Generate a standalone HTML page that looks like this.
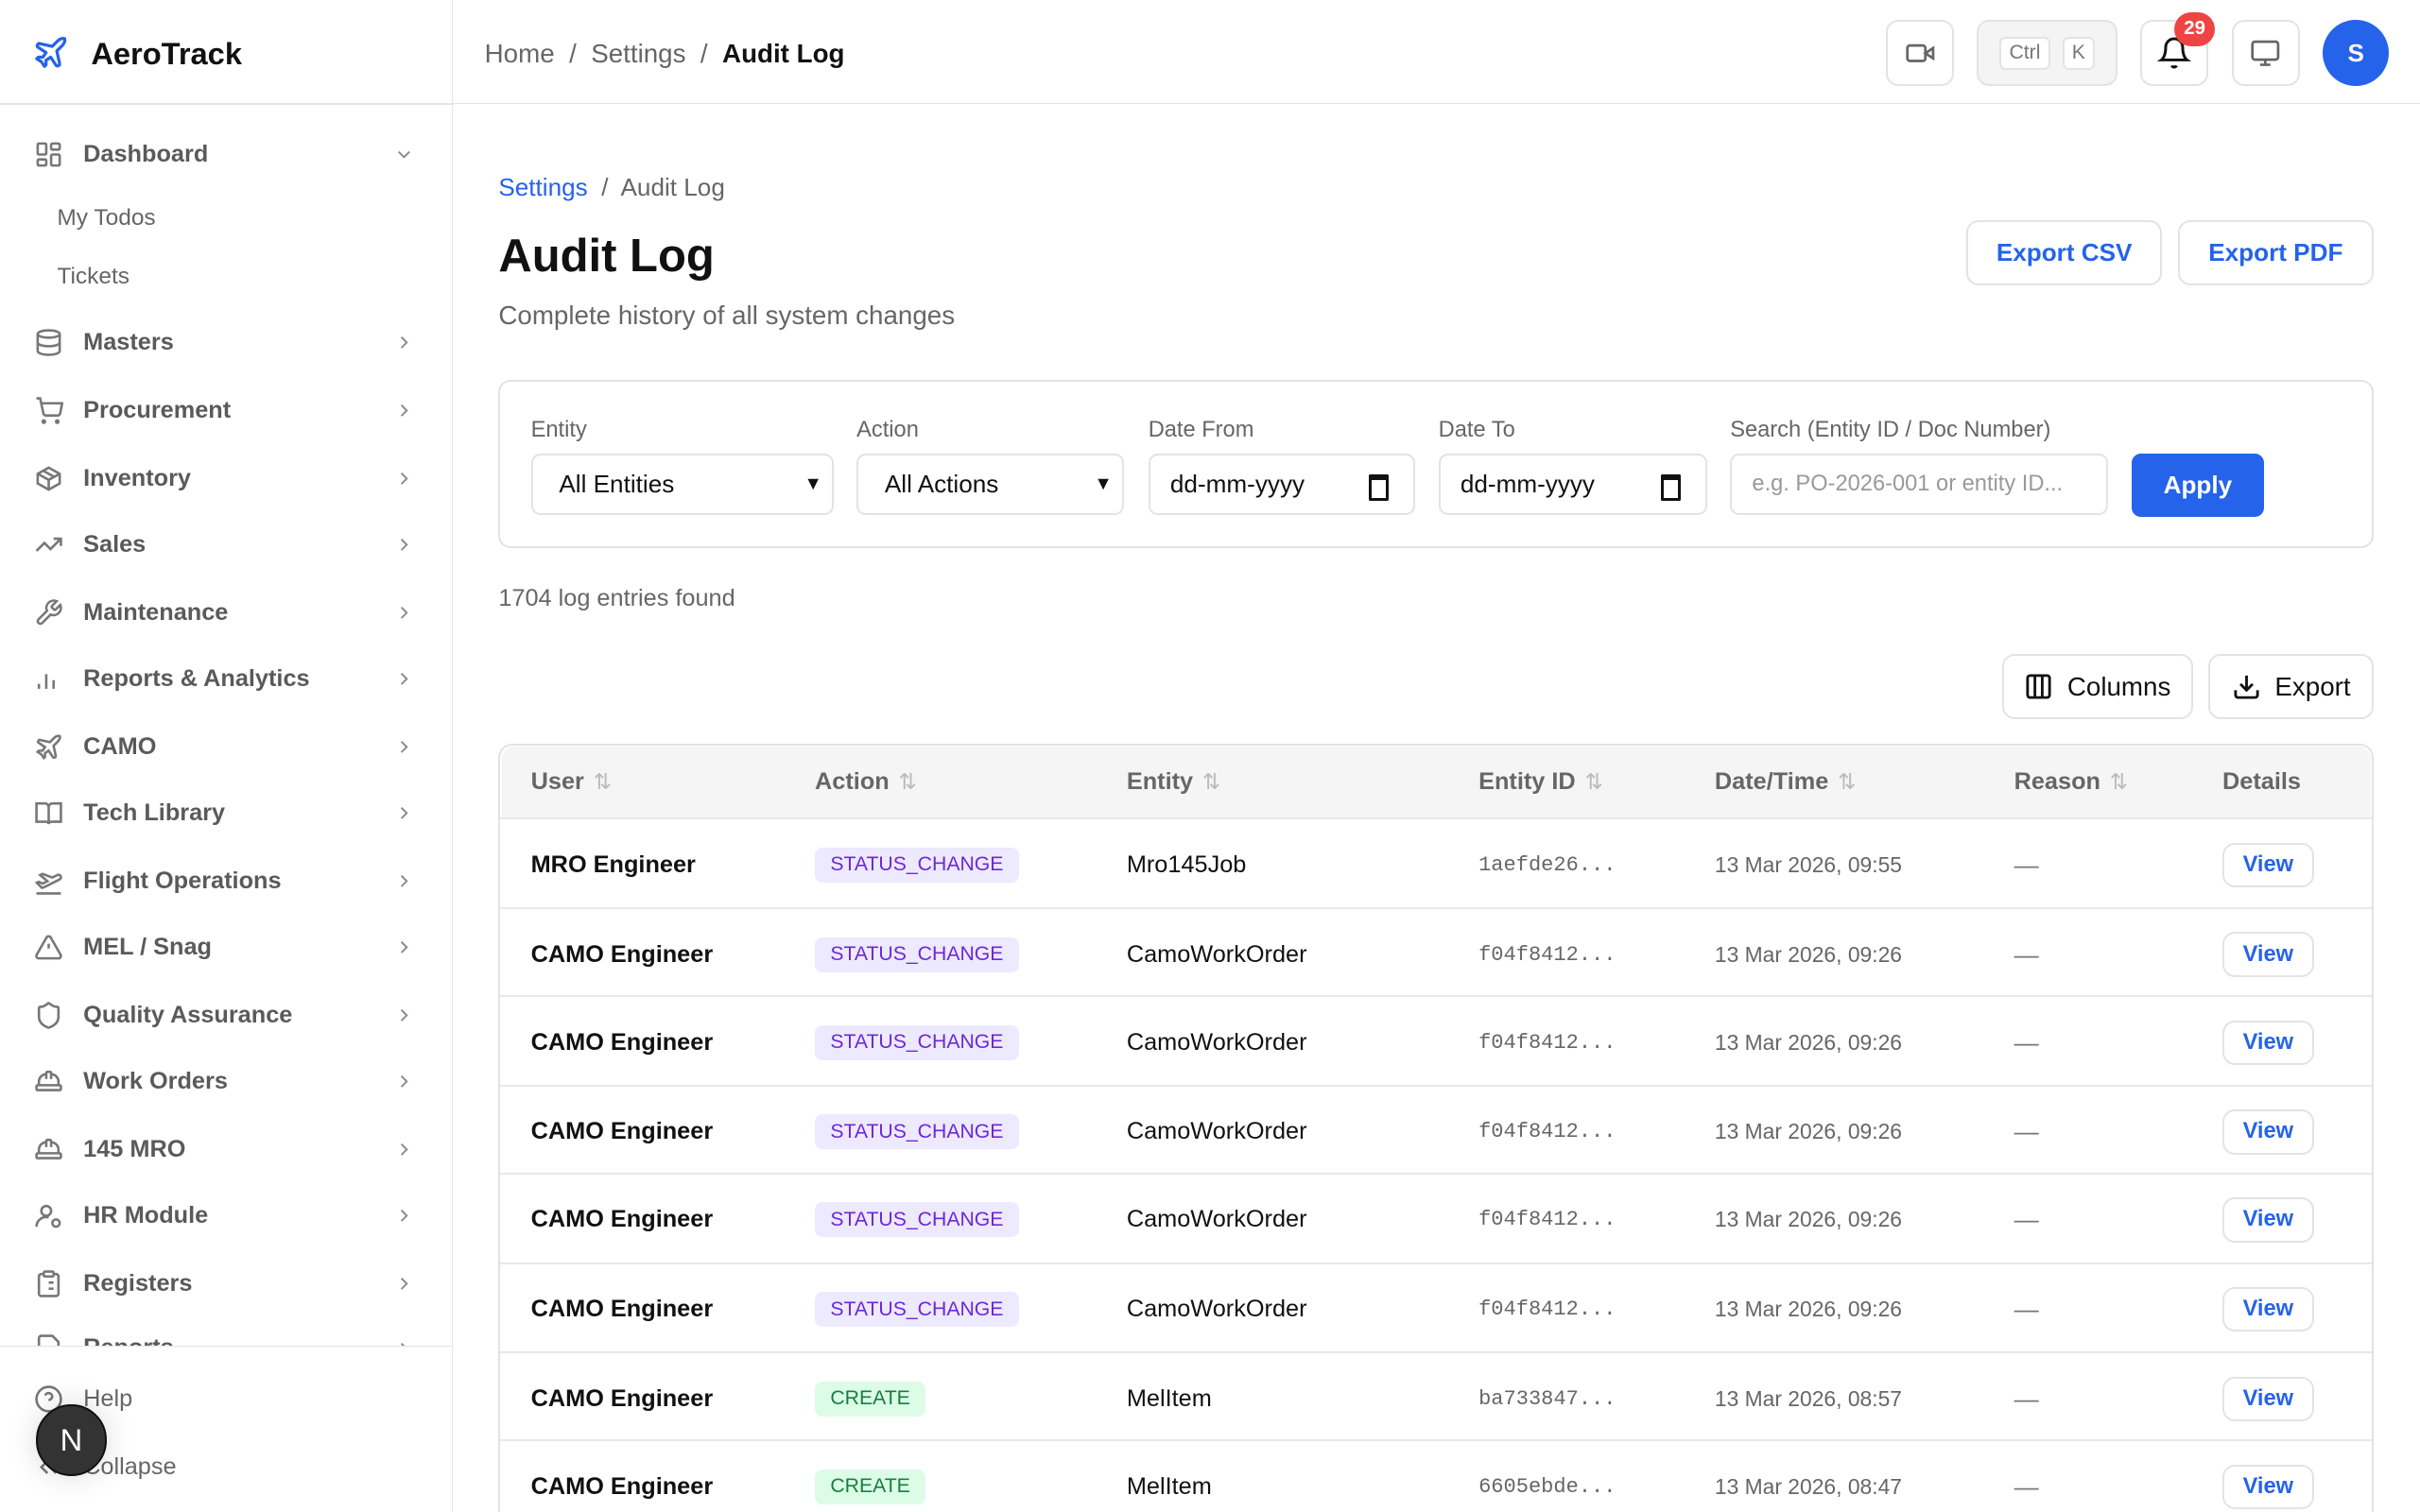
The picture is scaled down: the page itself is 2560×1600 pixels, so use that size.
<!DOCTYPE html>
<html><head><meta charset="utf-8"><style>
html,body{margin:0;padding:0;width:2560px;height:1600px;overflow:hidden;background:#fff}
#w{position:absolute;left:0;top:0;width:1568px;height:980px;zoom:1.63265;font-family:"Liberation Sans",sans-serif;color:#111;overflow:hidden}
.a{position:absolute}
.sb{left:0;top:0;width:293px;height:980px;border-right:1px solid #e5e5e5}
.hd{left:294px;top:0;right:0;height:67px;border-bottom:1px solid #e5e5e5}
.hline{left:0;top:67px;width:294px;height:1px;background:#e5e5e5}
.ni{position:absolute;left:22px;width:250px;height:24px;display:flex;align-items:center;font-size:15.5px;font-weight:bold;color:#5a5a5a}
.ni svg{width:19px;height:19px;margin-right:13px;flex:none}
.ni .ch{position:absolute;right:-10px;top:5px;width:14px;height:14px}
.sub{position:absolute;left:37px;font-size:15px;color:#666}
.btn{position:absolute;border:1.5px solid #e3e3e3;border-radius:8px;background:#fff;box-sizing:border-box;display:flex;align-items:center;justify-content:center}
.lbl{position:absolute;top:271px;font-size:14.5px;color:#666}
.inp{position:absolute;top:294px;height:40px;border:1.5px solid #e3e3e3;border-radius:6px;box-sizing:border-box;font-size:16px;display:flex;align-items:center;padding-left:17px;color:#111}
.th{position:absolute;top:498px;font-size:15.5px;font-weight:bold;color:#666}
.th i{font-style:normal;color:#bbb;font-weight:normal;margin-left:6px;font-size:14px}
.row{position:absolute;left:324px;width:1213px;height:57px;border-top:1.5px solid #e8e8e8}
.row div{position:absolute;top:1px;height:57px;display:flex;align-items:center}
.u{left:20px;font-weight:bold;font-size:15.5px}
.bd{left:204px}
.bd span{padding:4px 10px;border-radius:5px;font-size:13px;letter-spacing:0}
.s span{background:#ede9fe;color:#6d28d9}
.c span{background:#dcfce7;color:#15803d}
.en{left:406px;font-size:15.5px}
.id{left:634px;font-family:"Liberation Mono",monospace;font-size:13.5px;color:#666}
.dt{left:787px;font-size:14px;color:#666}
.rs{left:981px;color:#777}
.vw{left:1116px}
.vw span{border:1.5px solid #e3e3e3;border-radius:8px;padding:5px 12px;color:#2563eb;font-weight:bold;font-size:14.5px}
</style></head><body><div id="w">
<div class="a sb"></div>
<div class="a hd"></div>
<div class="a hline"></div>
<svg class="a" style="left:21px;top:22px" width="24" height="24" viewBox="0 0 24 24" fill="none" stroke="#2563eb" stroke-width="2" stroke-linecap="round" stroke-linejoin="round"><path d="M17.8 19.2 16 11l3.5-3.5C21 6 21.5 4 21 3c-1-.5-3 0-4.5 1.5L13 8 4.8 6.2c-.5-.1-.9.1-1.1.5l-.3.5c-.2.5-.1 1 .3 1.3L9 12l-2 3H4l-1 1 3 2 2 3 1-1v-3l3-2 3.5 5.3c.3.4.8.5 1.3.3l.5-.2c.4-.3.6-.7.5-1.2z"/></svg>
<div class="a" style="left:59px;top:23px;font-size:20px;font-weight:bold">AeroTrack</div>
<div class="a" style="left:314px;top:25px;font-size:17px;color:#666">Home &nbsp;/&nbsp; Settings &nbsp;/&nbsp; <b style="color:#111">Audit Log</b></div>
<div class="btn" style="left:1222px;top:13px;width:44px;height:43px"><svg width="20" height="20" viewBox="0 0 24 24" fill="none" stroke="#666" stroke-width="2"><rect x="2" y="6" width="14" height="12" rx="2"/><path d="m22 8-6 4 6 4z"/></svg></div>
<div class="btn" style="left:1281px;top:13px;width:91px;height:43px;background:#f4f4f4"><span style="border:1.5px solid #e3e3e3;background:#fff;border-radius:4px;font-size:13px;color:#777;padding:2px 5px;margin-right:8px">Ctrl</span><span style="border:1.5px solid #e3e3e3;background:#fff;border-radius:4px;font-size:13px;color:#777;padding:2px 5px">K</span></div>
<div class="btn" style="left:1387px;top:13px;width:44px;height:43px"><svg width="22" height="22" viewBox="0 0 24 24" fill="none" stroke="#111" stroke-width="2"><path d="M6 8a6 6 0 0 1 12 0c0 7 3 9 3 9H3s3-2 3-9"/><path d="M10.3 21a1.9 1.9 0 0 0 3.4 0"/></svg></div>
<div class="a" style="left:1409px;top:8px;width:26px;height:22px;border-radius:11px;background:#ef4444;color:#fff;font-size:12.5px;font-weight:bold;text-align:center;line-height:22px">29</div>
<div class="btn" style="left:1446px;top:13px;width:44px;height:43px"><svg width="20" height="20" viewBox="0 0 24 24" fill="none" stroke="#666" stroke-width="2"><rect x="2" y="3" width="20" height="14" rx="2"/><path d="M8 21h8M12 17v4"/></svg></div>
<div class="a" style="left:1505px;top:13px;width:43px;height:43px;border-radius:50%;background:#2563eb;color:#fff;font-weight:bold;font-size:16px;text-align:center;line-height:43px">S</div>

<div class="ni" style="top:88px"><svg viewBox="0 0 24 24" fill="none" stroke="#777" stroke-width="2"><rect x="3" y="3" width="7" height="9" rx="1"/><rect x="14" y="3" width="7" height="5" rx="1"/><rect x="14" y="12" width="7" height="9" rx="1"/><rect x="3" y="16" width="7" height="5" rx="1"/></svg>Dashboard<svg class="ch" viewBox="0 0 24 24" fill="none" stroke="#888" stroke-width="2"><path d="m6 9 6 6 6-6"/></svg></div>
<div class="sub" style="top:133px">My Todos</div>
<div class="sub" style="top:171px">Tickets</div>
<div class="a" style="left:0;top:872px;width:293px;height:1.5px;background:#e5e5e5;z-index:2"></div>
<div class="a" style="left:0;top:873px;width:293px;height:107px;background:#fff;z-index:2"></div>
<div class="ni" style="top:895px;font-weight:normal;color:#666;z-index:3"><svg viewBox="0 0 24 24" fill="none" stroke="#777" stroke-width="2"><circle cx="12" cy="12" r="10"/><path d="M9.1 9a3 3 0 0 1 5.8 1c0 2-3 3-3 3M12 17h.01"/></svg>Help</div>
<div class="ni" style="top:939px;font-weight:normal;color:#666;z-index:3"><svg viewBox="0 0 24 24" fill="none" stroke="#777" stroke-width="2"><path d="m11 17-5-5 5-5M18 17l-5-5 5-5"/></svg>Collapse</div>
<div class="a" style="left:23px;top:910px;width:44px;height:44px;border-radius:50%;background:#333;border:1.5px solid #111;color:#fff;font-size:20px;text-align:center;line-height:44px;box-shadow:0 0 20px rgba(0,0,0,.15);z-index:4">N</div>

<div class="a" style="left:323px;top:112px;font-size:16px;color:#666"><span style="color:#2563eb">Settings</span> &nbsp;/&nbsp; Audit Log</div>
<div class="a" style="left:323px;top:149px;font-size:30px;font-weight:bold">Audit Log</div>
<div class="a" style="left:323px;top:195px;font-size:17px;color:#666">Complete history of all system changes</div>
<div class="btn" style="left:1274px;top:143px;width:127px;height:42px;color:#2563eb;font-weight:bold;font-size:16px">Export CSV</div>
<div class="btn" style="left:1411px;top:143px;width:127px;height:42px;color:#2563eb;font-weight:bold;font-size:16px">Export PDF</div>

<div class="a" style="left:323px;top:246px;width:1215px;height:109px;border:1.5px solid #e3e3e3;border-radius:8px;box-sizing:border-box"></div>
<div class="lbl" style="left:344px">Entity</div>
<div class="lbl" style="left:555px">Action</div>
<div class="lbl" style="left:744px">Date From</div>
<div class="lbl" style="left:932px">Date To</div>
<div class="lbl" style="left:1121px">Search (Entity ID / Doc Number)</div>
<div class="inp" style="left:344px;width:196px">All Entities<span style="position:absolute;right:6px;font-size:12px">&#9660;</span></div>
<div class="inp" style="left:555px;width:173px">All Actions<span style="position:absolute;right:6px;font-size:12px">&#9660;</span></div>
<div class="inp" style="left:744px;width:173px;padding-left:13px">dd-mm-yyyy<span style="position:absolute;right:16px;top:12px;width:9px;height:12px;border:2px solid #111;border-top-width:4px;border-radius:1px"></span></div>
<div class="inp" style="left:932px;width:174px;padding-left:13px">dd-mm-yyyy<span style="position:absolute;right:16px;top:12px;width:9px;height:12px;border:2px solid #111;border-top-width:4px;border-radius:1px"></span></div>
<div class="inp" style="left:1121px;width:245px;color:#999;font-size:14.5px;padding-left:13px">e.g. PO-2026-001 or entity ID...</div>
<div class="a" style="left:1381px;top:294px;width:86px;height:41px;border-radius:6px;background:#2563eb;color:#fff;font-weight:bold;font-size:16px;text-align:center;line-height:41px">Apply</div>

<div class="a" style="left:323px;top:379px;font-size:15.5px;color:#666">1704 log entries found</div>
<div class="btn" style="left:1297px;top:424px;width:124px;height:42px;font-size:17px"><svg width="19" height="19" viewBox="0 0 24 24" fill="none" stroke="#111" stroke-width="2.2" style="margin-right:9px"><rect x="3" y="3" width="18" height="18" rx="2"/><path d="M9 3v18M15 3v18"/></svg>Columns</div>
<div class="btn" style="left:1431px;top:424px;width:107px;height:42px;font-size:17px"><svg width="19" height="19" viewBox="0 0 24 24" fill="none" stroke="#111" stroke-width="2.2" style="margin-right:9px"><path d="M21 15v4a2 2 0 0 1-2 2H5a2 2 0 0 1-2-2v-4M7 10l5 5 5-5M12 15V3"/></svg>Export</div>

<div class="a" style="left:323px;top:482px;width:1215px;height:520px;border:1.5px solid #e3e3e3;border-radius:9px;box-sizing:border-box"></div>
<div class="a" style="left:325px;top:484px;width:1211px;height:46px;background:#f5f5f5;border-radius:8px 8px 0 0"></div>
<div class="th" style="left:344px">User<i>&#8645;</i></div>
<div class="th" style="left:528px">Action<i>&#8645;</i></div>
<div class="th" style="left:730px">Entity<i>&#8645;</i></div>
<div class="th" style="left:958px">Entity ID<i>&#8645;</i></div>
<div class="th" style="left:1111px">Date/Time<i>&#8645;</i></div>
<div class="th" style="left:1305px">Reason<i>&#8645;</i></div>
<div class="th" style="left:1440px">Details</div>

<div class="row" style="top:530px"><div class="u">MRO Engineer</div><div class="bd s"><span>STATUS_CHANGE</span></div><div class="en">Mro145Job</div><div class="id">1aefde26...</div><div class="dt">13 Mar 2026, 09:55</div><div class="rs">—</div><div class="vw"><span>View</span></div></div>
<div class="row" style="top:588px"><div class="u">CAMO Engineer</div><div class="bd s"><span>STATUS_CHANGE</span></div><div class="en">CamoWorkOrder</div><div class="id">f04f8412...</div><div class="dt">13 Mar 2026, 09:26</div><div class="rs">—</div><div class="vw"><span>View</span></div></div>
<div class="row" style="top:645px"><div class="u">CAMO Engineer</div><div class="bd s"><span>STATUS_CHANGE</span></div><div class="en">CamoWorkOrder</div><div class="id">f04f8412...</div><div class="dt">13 Mar 2026, 09:26</div><div class="rs">—</div><div class="vw"><span>View</span></div></div>
<div class="row" style="top:703px"><div class="u">CAMO Engineer</div><div class="bd s"><span>STATUS_CHANGE</span></div><div class="en">CamoWorkOrder</div><div class="id">f04f8412...</div><div class="dt">13 Mar 2026, 09:26</div><div class="rs">—</div><div class="vw"><span>View</span></div></div>
<div class="row" style="top:760px"><div class="u">CAMO Engineer</div><div class="bd s"><span>STATUS_CHANGE</span></div><div class="en">CamoWorkOrder</div><div class="id">f04f8412...</div><div class="dt">13 Mar 2026, 09:26</div><div class="rs">—</div><div class="vw"><span>View</span></div></div>
<div class="row" style="top:818px"><div class="u">CAMO Engineer</div><div class="bd s"><span>STATUS_CHANGE</span></div><div class="en">CamoWorkOrder</div><div class="id">f04f8412...</div><div class="dt">13 Mar 2026, 09:26</div><div class="rs">—</div><div class="vw"><span>View</span></div></div>
<div class="row" style="top:876px"><div class="u">CAMO Engineer</div><div class="bd c"><span>CREATE</span></div><div class="en">MelItem</div><div class="id">ba733847...</div><div class="dt">13 Mar 2026, 08:57</div><div class="rs">—</div><div class="vw"><span>View</span></div></div>
<div class="row" style="top:933px"><div class="u">CAMO Engineer</div><div class="bd c"><span>CREATE</span></div><div class="en">MelItem</div><div class="id">6605ebde...</div><div class="dt">13 Mar 2026, 08:47</div><div class="rs">—</div><div class="vw"><span>View</span></div></div>

<div class="ni" style="top:210px"><svg viewBox="0 0 24 24" fill="none" stroke="#777" stroke-width="2"><ellipse cx="12" cy="5" rx="9" ry="3"/><path d="M3 5v14a9 3 0 0 0 18 0V5M3 12a9 3 0 0 0 18 0"/></svg>Masters<svg class="ch" viewBox="0 0 24 24" fill="none" stroke="#888" stroke-width="2"><path d="m9 6 6 6-6 6"/></svg></div>
<div class="ni" style="top:254px"><svg viewBox="0 0 24 24" fill="none" stroke="#777" stroke-width="2"><circle cx="8" cy="21" r="1"/><circle cx="19" cy="21" r="1"/><path d="M2 2h3l2.7 12.4a2 2 0 0 0 2 1.6h9.7a2 2 0 0 0 2-1.6L23 6H6"/></svg>Procurement<svg class="ch" viewBox="0 0 24 24" fill="none" stroke="#888" stroke-width="2"><path d="m9 6 6 6-6 6"/></svg></div>
<div class="ni" style="top:298px"><svg viewBox="0 0 24 24" fill="none" stroke="#777" stroke-width="2"><path d="M21 8 12 3 3 8v8l9 5 9-5zM3 8l9 5 9-5M12 13v8M7.5 5.5l9 5"/></svg>Inventory<svg class="ch" viewBox="0 0 24 24" fill="none" stroke="#888" stroke-width="2"><path d="m9 6 6 6-6 6"/></svg></div>
<div class="ni" style="top:341px"><svg viewBox="0 0 24 24" fill="none" stroke="#777" stroke-width="2"><path d="m22 7-8.5 8.5-5-5L2 17M16 7h6v6"/></svg>Sales<svg class="ch" viewBox="0 0 24 24" fill="none" stroke="#888" stroke-width="2"><path d="m9 6 6 6-6 6"/></svg></div>
<div class="ni" style="top:385px"><svg viewBox="0 0 24 24" fill="none" stroke="#777" stroke-width="2"><path d="M14.7 6.3a1 1 0 0 0 0 1.4l1.6 1.6a1 1 0 0 0 1.4 0l3.8-3.8a6 6 0 0 1-7.900 7.9l-6.9 6.9a2.1 2.1 0 0 1-3-3l6.9-6.9a6 6 0 0 1 7.9-7.9z"/></svg>Maintenance<svg class="ch" viewBox="0 0 24 24" fill="none" stroke="#888" stroke-width="2"><path d="m9 6 6 6-6 6"/></svg></div>
<div class="ni" style="top:428px"><svg viewBox="0 0 24 24" fill="none" stroke="#777" stroke-width="2"><path d="M4 20v-4M10 20V8M16 20v-7"/></svg>Reports &amp; Analytics<svg class="ch" viewBox="0 0 24 24" fill="none" stroke="#888" stroke-width="2"><path d="m9 6 6 6-6 6"/></svg></div>
<div class="ni" style="top:472px"><svg viewBox="0 0 24 24" fill="none" stroke="#777" stroke-width="2"><path d="M17.8 19.2 16 11l3.5-3.5C21 6 21.5 4 21 3c-1-.5-3 0-4.5 1.5L13 8 4.8 6.2c-.5-.1-.9.1-1.1.5l-.3.5c-.2.5-.1 1 .3 1.3L9 12l-2 3H4l-1 1 3 2 2 3 1-1v-3l3-2 3.5 5.3c.3.4.8.5 1.3.3l.5-.2c.4-.3.6-.7.5-1.200z"/></svg>CAMO<svg class="ch" viewBox="0 0 24 24" fill="none" stroke="#888" stroke-width="2"><path d="m9 6 6 6-6 6"/></svg></div>
<div class="ni" style="top:515px"><svg viewBox="0 0 24 24" fill="none" stroke="#777" stroke-width="2"><path d="M2 4h7a3 3 0 0 1 3 3v14a2 2 0 0 0-2-2H2zM22 4h-7a3 3 0 0 0-3 3v14a2 2 0 0 1 2-2h8z"/></svg>Tech Library<svg class="ch" viewBox="0 0 24 24" fill="none" stroke="#888" stroke-width="2"><path d="m9 6 6 6-6 6"/></svg></div>
<div class="ni" style="top:559px"><svg viewBox="0 0 24 24" fill="none" stroke="#777" stroke-width="2"><path d="M2 22h20M6.4 17.4 2.3 13.2 4 12.5l3 1.5 4-2-6-5 2-1 8 3 4-2a2 2 0 0 1 2 3.5L8 17z"/></svg>Flight Operations<svg class="ch" viewBox="0 0 24 24" fill="none" stroke="#888" stroke-width="2"><path d="m9 6 6 6-6 6"/></svg></div>
<div class="ni" style="top:602px"><svg viewBox="0 0 24 24" fill="none" stroke="#777" stroke-width="2"><path d="m21.7 18-8-14a2 2 0 0 0-3.5 0l-8 14A2 2 0 0 0 4 21h16a2 2 0 0 0 1.7-3zM12 9v4M12 17h.01"/></svg>MEL / Snag<svg class="ch" viewBox="0 0 24 24" fill="none" stroke="#888" stroke-width="2"><path d="m9 6 6 6-6 6"/></svg></div>
<div class="ni" style="top:646px"><svg viewBox="0 0 24 24" fill="none" stroke="#777" stroke-width="2"><path d="M20 13c0 5-3.5 7.5-7.7 9a1 1 0 0 1-.7 0C7.5 20.5 4 18 4 13V6a1 1 0 0 1 1-1c2 0 4.5-1.2 6.2-2.7a1.2 1.2 0 0 1 1.5 0C14.5 3.8 17 5 19 5a1 1 0 0 1 1 1z"/></svg>Quality Assurance<svg class="ch" viewBox="0 0 24 24" fill="none" stroke="#888" stroke-width="2"><path d="m9 6 6 6-6 6"/></svg></div>
<div class="ni" style="top:689px"><svg viewBox="0 0 24 24" fill="none" stroke="#777" stroke-width="2"><path d="M2 18a1 1 0 0 0 1 1h18a1 1 0 0 0 1-1v-2a1 1 0 0 0-1-1H3a1 1 0 0 0-1 1zM10 10V5a1 1 0 0 1 1-1h2a1 1 0 0 1 1 1v5M4 15v-3a6 6 0 0 1 6-6M14 6a6 6 0 0 1 6 6v3"/></svg>Work Orders<svg class="ch" viewBox="0 0 24 24" fill="none" stroke="#888" stroke-width="2"><path d="m9 6 6 6-6 6"/></svg></div>
<div class="ni" style="top:733px"><svg viewBox="0 0 24 24" fill="none" stroke="#777" stroke-width="2"><path d="M2 18a1 1 0 0 0 1 1h18a1 1 0 0 0 1-1v-2a1 1 0 0 0-1-1H3a1 1 0 0 0-1 1zM10 10V5a1 1 0 0 1 1-1h2a1 1 0 0 1 1 1v5M4 15v-3a6 6 0 0 1 6-6M14 6a6 6 0 0 1 6 6v3"/></svg>145 MRO<svg class="ch" viewBox="0 0 24 24" fill="none" stroke="#888" stroke-width="2"><path d="m9 6 6 6-6 6"/></svg></div>
<div class="ni" style="top:776px"><svg viewBox="0 0 24 24" fill="none" stroke="#777" stroke-width="2"><circle cx="10" cy="8" r="4"/><path d="M2 21a8 8 0 0 1 10-7.7"/><circle cx="18" cy="18" r="3"/></svg>HR Module<svg class="ch" viewBox="0 0 24 24" fill="none" stroke="#888" stroke-width="2"><path d="m9 6 6 6-6 6"/></svg></div>
<div class="ni" style="top:820px"><svg viewBox="0 0 24 24" fill="none" stroke="#777" stroke-width="2"><rect x="8" y="2" width="8" height="4" rx="1"/><path d="M16 4h2a2 2 0 0 1 2 2v14a2 2 0 0 1-2 2H6a2 2 0 0 1-2-2V6a2 2 0 0 1 2-2h2M12 11h4M12 16h4M8 11h.01M8 16h.01"/></svg>Registers<svg class="ch" viewBox="0 0 24 24" fill="none" stroke="#888" stroke-width="2"><path d="m9 6 6 6-6 6"/></svg></div>
<div class="ni" style="top:862px;height:24px"><svg viewBox="0 0 24 24" fill="none" stroke="#777" stroke-width="2"><path d="M15 2H6a2 2 0 0 0-2 2v16a2 2 0 0 0 2 2h12a2 2 0 0 0 2-2V7z"/></svg>Reports<svg class="ch" viewBox="0 0 24 24" fill="none" stroke="#888" stroke-width="2"><path d="m9 6 6 6-6 6"/></svg></div>
</div></body></html>
